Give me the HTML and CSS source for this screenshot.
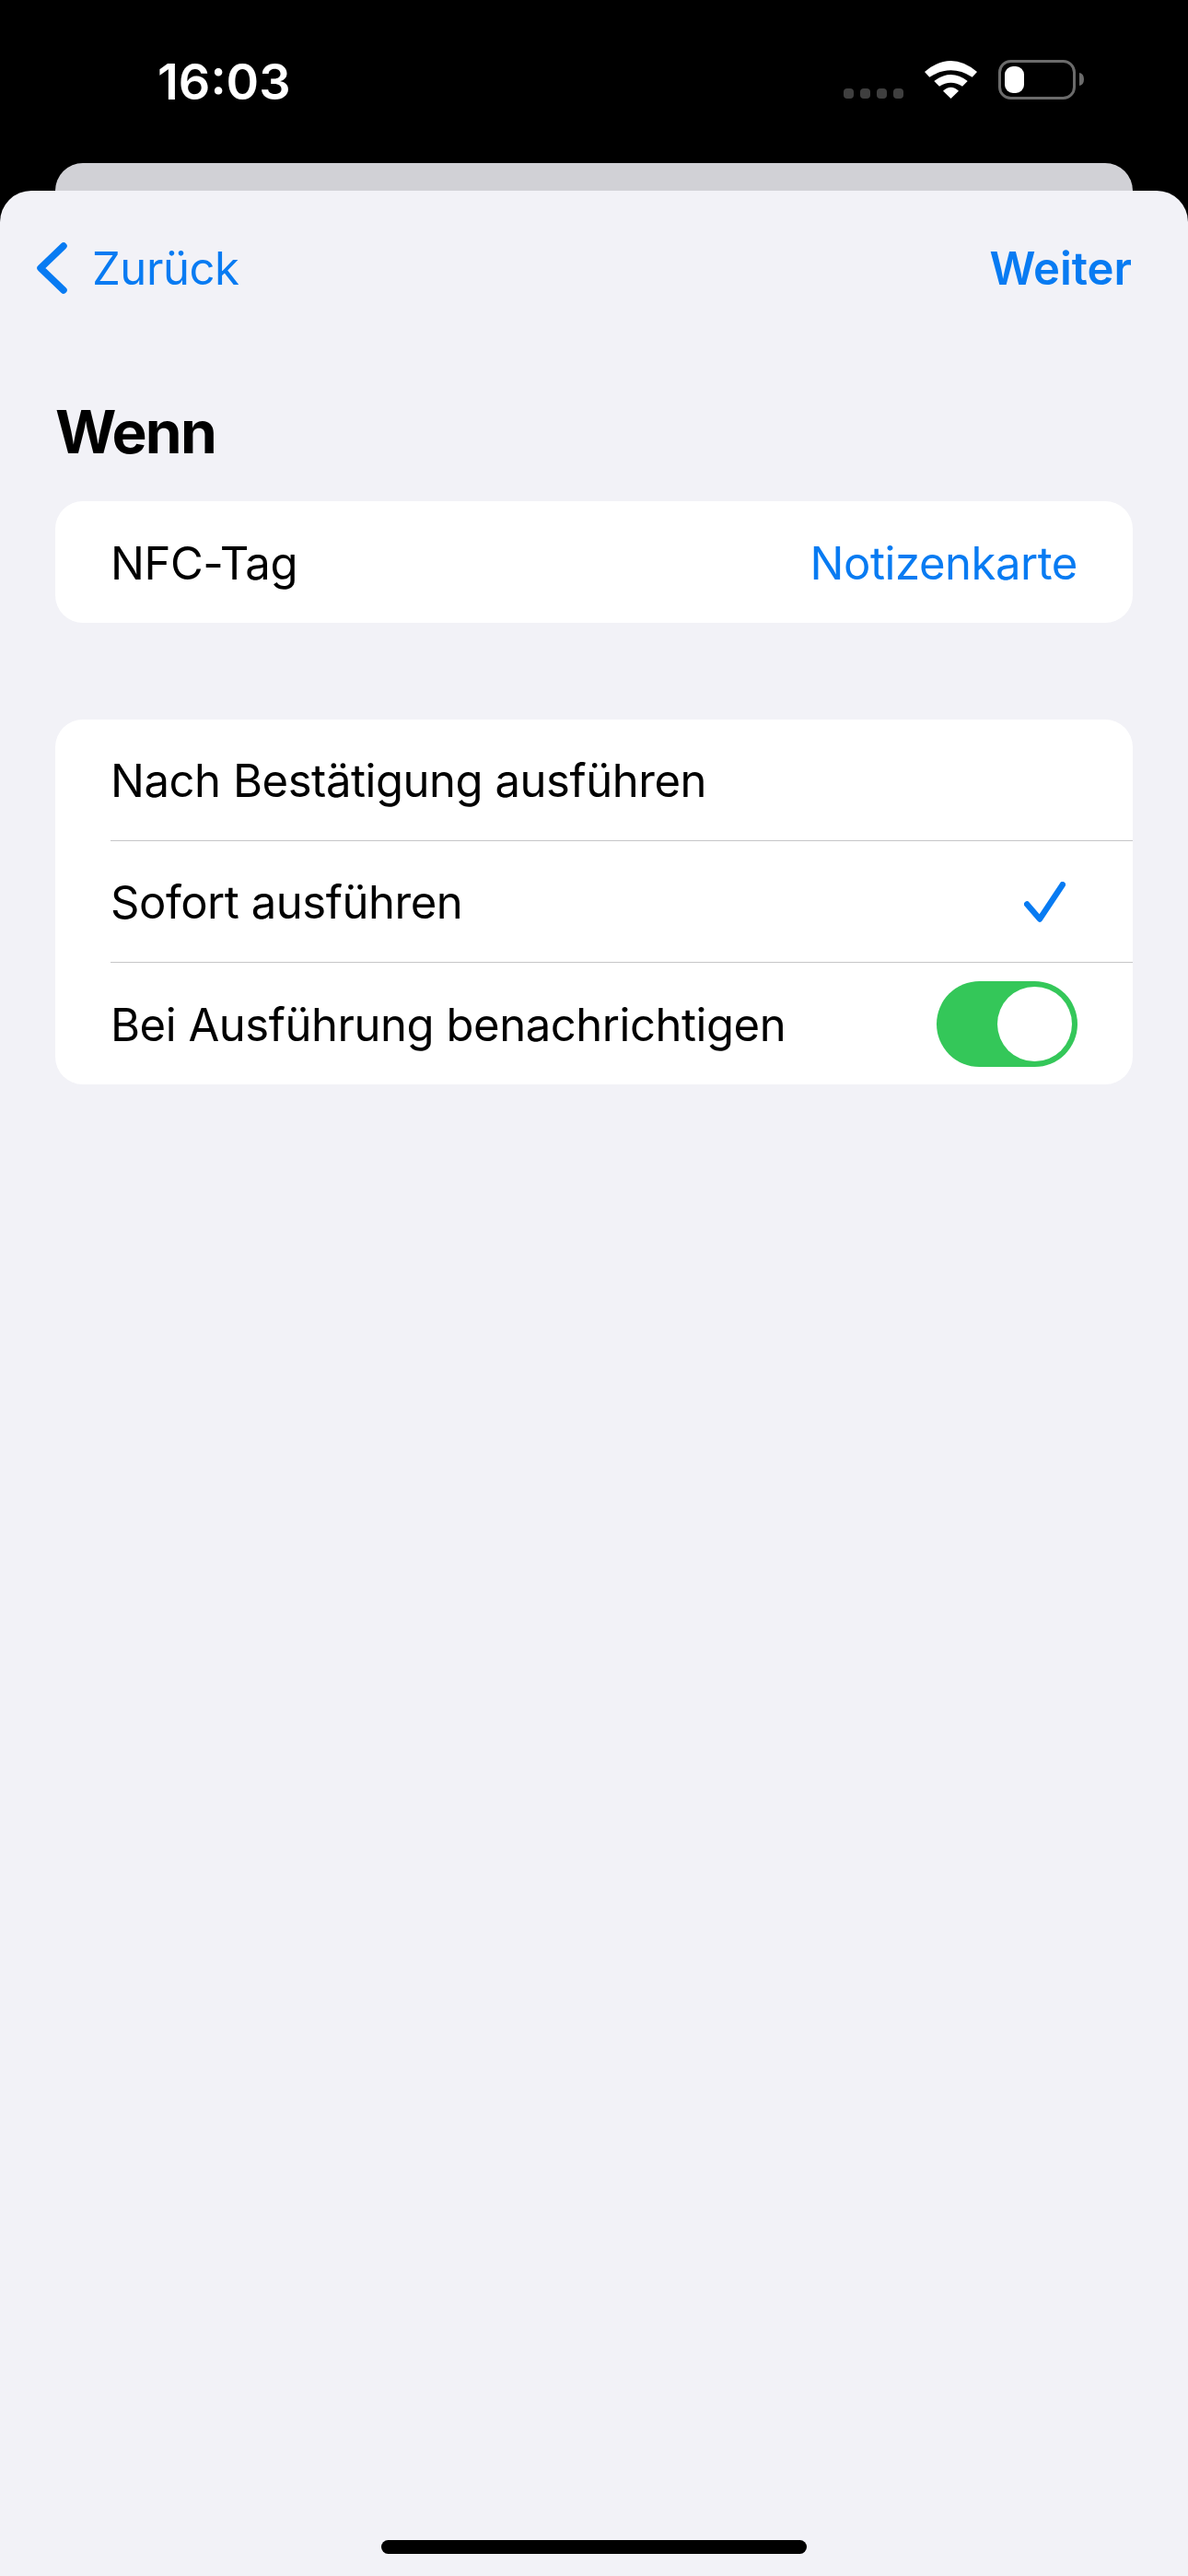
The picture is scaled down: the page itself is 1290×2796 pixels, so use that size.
FILE: index.html
```html
<!DOCTYPE html>
<html lang="de">
<head>
    <meta charset="UTF-8">
    <meta name="viewport" content="width=device-width, initial-scale=1.0">
    <title>Wenn</title>
    <link rel="stylesheet" href="styles.css">
</head>
<body>
    <div class="status-bar">
        <span class="time">16:03</span>
        <div class="status-icons">
            <div class="signal">
                <span class="dot"></span>
                <span class="dot"></span>
                <span class="dot"></span>
                <span class="dot"></span>
            </div>
            <svg class="wifi" width="57" height="41" viewBox="0 0 57 41">
                <path d="M0 12Q28.5 -12 57 12L51.7 17.7Q28.5 2.9 5.3 17.7Z"/>
                <path d="M10.3 22Q28.5 8 46.7 22L41 27.7Q28.5 19.7 16 27.7Z"/>
                <path d="M20 32.7Q28.5 24.7 37 32.7L28.5 41Z"/>
            </svg>
            <svg class="battery" width="93" height="43" viewBox="0 0 93 43">
                <rect class="battery-body" x="1.5" y="1.5" width="81" height="40" rx="12"/>
                <rect class="battery-level" x="7" y="7" width="21" height="29" rx="9"/>
                <path class="battery-nub" d="M88 14Q93 15 93 21Q93 27 88 28Z"/>
            </svg>
        </div>
    </div>

    <!-- Karte dahinter -->
    <div class="back-card"></div>

    <main class="sheet">
        <nav class="nav">
            <a class="nav-back">
                <svg width="33" height="56" viewBox="0 0 33 56">
                    <path class="chevron" d="M29 4L4 28L29 52"/>
                </svg>
                <span class="nav-label">Zurück</span>
            </a>
            <a class="nav-next nav-label">Weiter</a>
        </nav>

        <h1 class="title">Wenn</h1>

        <section class="card">
            <div class="row">
                <span>NFC-Tag</span>
                <span class="row-value">Notizenkarte</span>
            </div>
        </section>

        <section class="card card-options">
            <div class="row">
                <span>Nach Bestätigung ausführen</span>
            </div>
            <div class="row">
                <span>Sofort ausführen</span>
                <svg class="check" width="45" height="44" viewBox="0 0 45 44">
                    <path d="M3.2 24.5L17 40.5L41.8 3.2"/>
                </svg>
            </div>
            <div class="row">
                <span>Bei Ausführung benachrichtigen</span>
                <div class="toggle"><span class="toggle-thumb"></span></div>
            </div>
        </section>

        <div class="home-indicator"></div>
    </main>
</body>
</html>
```

FILE: styles.css
```css
* {
    box-sizing: border-box;
}

html, body {
    height: 100%;
}

body {
    display: flex;
    flex-direction: column;
    margin: 0;
    background-color: #000;
    color: #000;
    font-family: Inter, "Liberation Sans", sans-serif;
    font-size: 49px;
    letter-spacing: -0.45px;
    line-height: 58px;
}

/* Statusleiste */
.status-bar {
    display: flex;
    justify-content: space-between;
    align-items: flex-end;
    height: 177px;
    padding: 0 113px 69px 171px;
}

.time {
    margin-bottom: -8px;
    color: #fff;
    font-size: 54px;
    font-weight: 600;
    letter-spacing: 0;
    line-height: 54px;
}

.status-icons {
    display: flex;
    align-items: flex-end;
    gap: 23px;
}

.signal {
    display: flex;
    gap: 7px;
    margin-bottom: 1px;
}

.dot {
    width: 11px;
    height: 11px;
    border-radius: 4px;
    background-color: #3f3f3f;
}

.wifi {
    display: block;
    margin-bottom: 1px;
    fill: #fff;
}

.battery {
    display: block;
}

.battery-body {
    fill: none;
    stroke: #6b6b6b;
    stroke-width: 3;
}

.battery-level {
    fill: #fff;
}

.battery-nub {
    fill: #6b6b6b;
}

.back-card {
    flex: none;
    height: 30px;
    margin: 0 60px;
    border-radius: 30px 30px 0 0;
    background-color: #d1d1d6;
}

.sheet {
    flex: 1;
    display: flex;
    flex-direction: column;
    border-radius: 34px 34px 0 0;
    background-color: #f2f2f7;
}

/* Navigation */
.nav {
    display: flex;
    justify-content: space-between;
    align-items: center;
    padding: 54px 61px 0 40px;
}

.nav-back {
    display: flex;
    align-items: center;
    gap: 27px;
    color: #087bf2;
}

.nav-back svg {
    display: block;
}

.nav-label {
    margin-top: 2px;
}

.chevron {
    fill: none;
    stroke: #087bf2;
    stroke-width: 7.5;
    stroke-linecap: round;
    stroke-linejoin: round;
}

.nav-next {
    color: #087bf2;
    font-weight: 600;
    letter-spacing: 0;
}

.title {
    margin: 109px 0 37px 60px;
    font-size: 64px;
    font-weight: 700;
    letter-spacing: -1.75px;
    line-height: 77px;
}

/* Karten */
.card {
    margin: 0 60px;
    border-radius: 30px;
    background-color: #fff;
}

.card-options {
    margin-top: 105px;
}

.row {
    display: flex;
    justify-content: space-between;
    align-items: center;
    height: 132px;
    margin-left: 60px;
    padding-right: 60px;
}

.row:not(:last-child) {
    border-bottom: 1px solid #c6c6c8;
}

.row > span {
    margin-top: 3px;
}

.row-value {
    color: #087bf2;
}

.check {
    display: block;
    margin-right: 13px;
}

.check path {
    fill: none;
    stroke: #087bf2;
    stroke-width: 6.5;
    stroke-linecap: round;
    stroke-linejoin: round;
}

.toggle {
    display: flex;
    justify-content: flex-end;
    width: 153px;
    height: 93px;
    padding: 6px;
    border-radius: 47px;
    background-color: #34c759;
}

.toggle-thumb {
    width: 81px;
    height: 81px;
    border-radius: 50%;
    background-color: #fff;
}

.home-indicator {
    width: 462px;
    height: 15px;
    margin: auto auto 24px;
    border-radius: 8px;
    background-color: #000;
}
```
